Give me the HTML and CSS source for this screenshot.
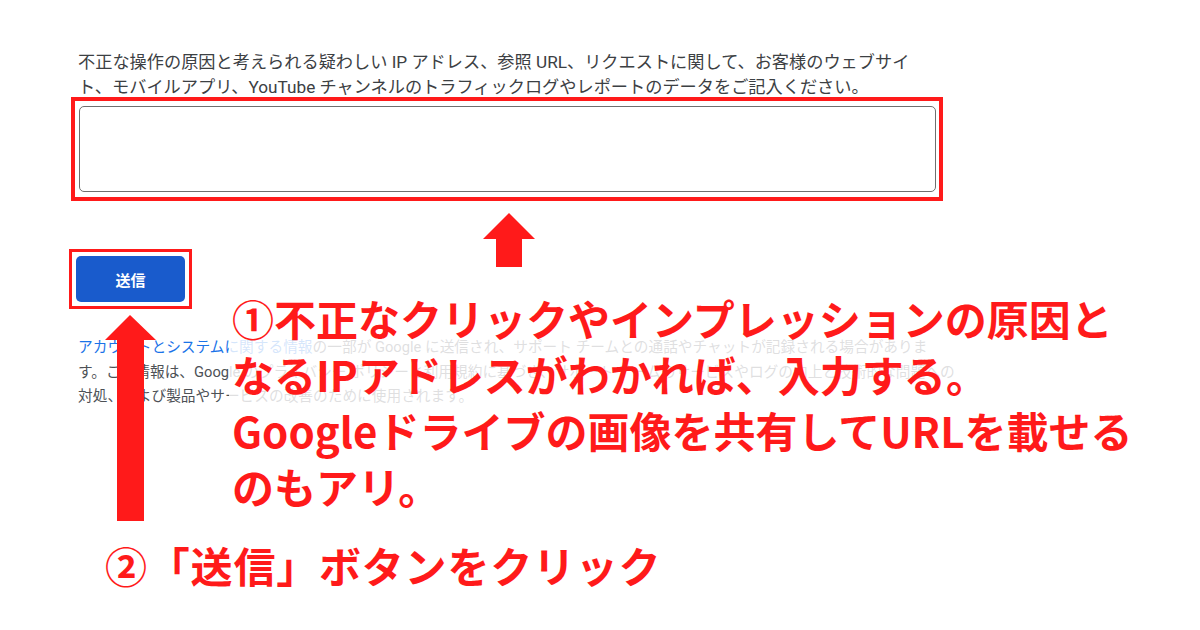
FILE: index.html
```html
<!DOCTYPE html>
<html lang="ja">
<head>
<meta charset="utf-8">
<title>送信</title>
<link rel="stylesheet" href="styles.css">
</head>
<body>
<div class="page">
  <p class="intro">不正な操作の原因と考えられる疑わしい IP アドレス、参照 URL、リクエストに関して、お客様のウェブサイ<br>ト、モバイルアプリ、YouTube チャンネルのトラフィックログやレポートのデータをご記入ください。</p>
  <div class="hl hl-field"><textarea class="field"></textarea></div>
  <div class="hl hl-btn"><button class="send" type="button">送信</button></div>
  <p class="notice"><a class="link">アカウントとシステムに関する情報</a>の一部が Google に送信され、サポート チームとの通話やチャットが記録される場合がありま<br>す。この情報は、Google のプライバシー ポリシーと利用規約に基づき、サポート チームのサービスやログの向上と技術的な問題への<br>対処、および製品やサービスの改善のために使用されます。</p>

  <svg class="arrow arrow-up" width="52" height="54" viewBox="0 0 52 54"><polygon points="26,0 52,26 39,26 39,54 13,54 13,26 0,26" fill="#ff1a1a"/></svg>
  <svg class="arrow arrow-long" width="52" height="206" viewBox="0 0 52 206"><polygon points="25,0 51,25 39,25 39,206 12,206 12,25 0,25" fill="#ff1a1a"/></svg>

  <div class="note note-1">①不正なクリックやインプレッションの原因と<br>なるIPアドレスがわかれば、入力する。<br>Googleドライブの画像を共有してURLを載せる<br>のもアリ。</div>
  <div class="note note-2">②「送信」ボタンをクリック</div>
</div>
</body>
</html>
```

FILE: styles.css
```css
html, body {
  margin: 0;
  padding: 0;
  background: #ffffff;
}

.page {
  position: relative;
  width: 1200px;
  height: 630px;
  overflow: hidden;
  padding: 50px 0 0 0;
  box-sizing: border-box;
  font-family: Roboto, "Noto Sans CJK JP", sans-serif;
}

.intro {
  margin: 0 0 0 78px;
  font-size: 17.2px;
  line-height: 25px;
  color: #3c4043;
  white-space: nowrap;
}

.hl {
  border: 4px solid #ff1a1a;
  box-sizing: border-box;
}

.hl-field {
  margin: -3px 0 0 71px;
  width: 872px;
  height: 104px;
  padding: 5px 3px 5px 4px;
}

.field {
  display: block;
  width: 100%;
  height: 100%;
  box-sizing: border-box;
  border: 1.5px solid #6f6f6f;
  border-radius: 5px;
  resize: none;
  background: #fff;
  margin: 0;
}

.hl-btn {
  margin: 48px 0 0 69px;
  width: 123px;
  height: 60px;
  border-width: 3px;
  padding: 4px;
}

.send {
  display: block;
  width: 100%;
  height: 100%;
  border: 0;
  border-radius: 5px;
  background: #195bcc;
  color: #ffffff;
  font-family: Roboto, "Noto Sans CJK JP", sans-serif;
  font-weight: 700;
  font-size: 15px;
  padding: 0;
}

.notice {
  margin: 26px 0 0 78px;
  font-size: 14.7px;
  line-height: 24.5px;
  color: #4d5156;
  white-space: nowrap;
}

.link {
  color: #1a73e8;
}

.arrow {
  position: absolute;
  display: block;
}

.arrow-up {
  left: 483px;
  top: 213px;
}

.arrow-long {
  left: 105px;
  top: 315px;
}

.note {
  position: absolute;
  font-family: "Noto Sans CJK JP", sans-serif;
  font-weight: 700;
  font-size: 42px;
  color: #ff1a1a;
  white-space: nowrap;
}

.note-1 {
  left: 229px;
  top: 290px;
  width: 930px;
  padding: 0 0 6px 3px;
  line-height: 56px;
  background: rgba(255, 255, 255, 0.82);
}

.note-2 {
  left: 105px;
  top: 537px;
  line-height: 56px;
  letter-spacing: 0.8px;
}
```
